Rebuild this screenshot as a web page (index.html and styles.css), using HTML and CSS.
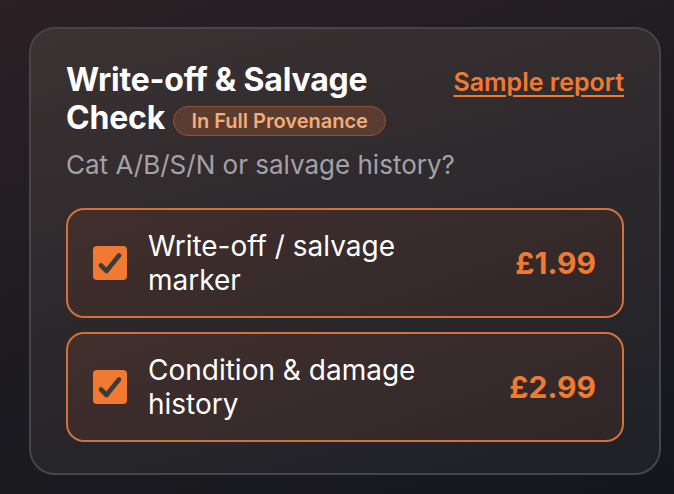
FILE: index.html
```html
<!DOCTYPE html>
<html lang="en">
<head>
<meta charset="utf-8">
<link rel="stylesheet" href="styles.css">
</head>
<body>
<main class="page">
  <section class="card">
    <header class="card-head">
      <div class="title-wrap">
        <h2 class="title">Write-off &amp; Salvage Check <span class="badge">In Full Provenance</span></h2>
      </div>
      <a class="sample" href="#">Sample report</a>
    </header>
    <p class="subtitle">Cat A/B/S/N or salvage history?</p>
    <div class="options">
      <label class="option">
        <span class="check"><svg viewBox="0 0 34 34" width="34" height="34"><path d="M8 19.5 L13.5 25 L26 9.5" fill="none" stroke="#3b3b3d" stroke-width="4.6" stroke-linecap="round" stroke-linejoin="round"/></svg></span>
        <span class="opt-label">Write-off / salvage marker</span>
        <span class="price">£1.99</span>
      </label>
      <label class="option">
        <span class="check"><svg viewBox="0 0 34 34" width="34" height="34"><path d="M8 19.5 L13.5 25 L26 9.5" fill="none" stroke="#3b3b3d" stroke-width="4.6" stroke-linecap="round" stroke-linejoin="round"/></svg></span>
        <span class="opt-label">Condition &amp; damage history</span>
        <span class="price">£2.99</span>
      </label>
    </div>
  </section>
</main>
</body>
</html>
```
FILE: styles.css
```css
* { box-sizing: border-box; }
html, body {
  margin: 0;
  height: 100%;
}
body {
  font-family: Inter, "Noto Sans", sans-serif;
  background: linear-gradient(160deg, #2c2125 0%, #1e1c21 45%, #15171d 100%);
  color: #fff;
}
.page {
  padding: 27px 14px 20px 29px;
  height: 494px;
}
.card {
  width: 632px;
  height: 448px;
  border: 2px solid #45454a;
  border-radius: 26px;
  background: linear-gradient(165deg, #3b3233 0%, #2d292c 45%, #1f2128 100%);
  padding: 32px 35px 0 35px;
}
.card-head {
  display: flex;
  justify-content: space-between;
  align-items: flex-start;
}
.title-wrap { width: 360px; }
.title {
  margin: 0;
  font-size: 32px;
  line-height: 38px;
  font-weight: 700;
  letter-spacing: -0.2px;
  color: #fff;
}
.badge {
  display: inline-block;
  vertical-align: 1px;
  font-size: 20px;
  line-height: 28px;
  font-weight: 600;
  letter-spacing: 0;
  color: #f3ad76;
  background: #5b3c30;
  border: 1.5px solid #8c5636;
  border-radius: 16px;
  padding: 0 17px;
  margin-left: 1px;
}
.sample {
  margin-top: 6px;
  font-size: 25px;
  line-height: 30px;
  font-weight: 600;
  color: #f07a32;
  text-decoration: underline;
  text-decoration-thickness: 2px;
  text-underline-offset: 4px;
}
.subtitle {
  margin: 12px 0 0 0;
  font-size: 26px;
  line-height: 32px;
  color: #a3a2a6;
}
.options {
  margin-top: 27px;
  display: flex;
  flex-direction: column;
  gap: 14px;
}
.option {
  display: flex;
  align-items: center;
  height: 110px;
  border: 2px solid #d4703a;
  border-radius: 18px;
  background: linear-gradient(160deg, #412f2b 0%, #382b2b 50%, #302628 100%);
  padding: 0 26px 0 25px;
}
.check {
  width: 34px;
  height: 34px;
  flex: none;
  border-radius: 4px;
  background: #f07a32;
  display: flex;
}
.opt-label {
  margin-left: 21px;
  width: 300px;
  font-size: 28px;
  line-height: 34px;
  color: #fff;
}
.price {
  margin-left: auto;
  font-size: 30px;
  font-weight: 700;
  color: #f07a32;
}
```
